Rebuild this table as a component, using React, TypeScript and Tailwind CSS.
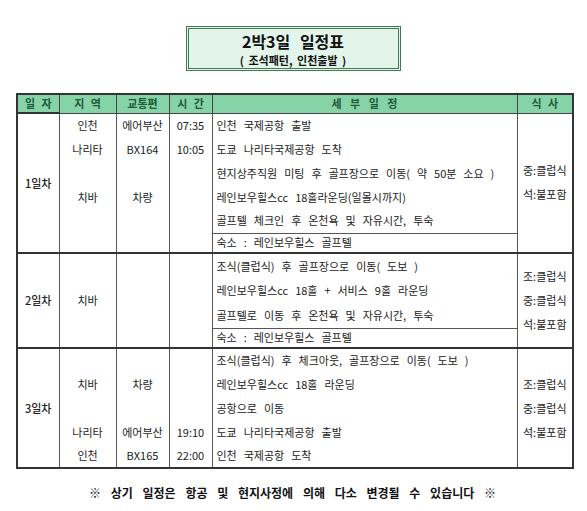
import React from 'react'

type Line = { area?: string; trans?: string; time?: string; text: string }

const days: { label: string; lines: Line[]; stay: string; meals: string[]; h: string; areaSpan?: string }[] = [
  {
    label: '1일차',
    h: 'h-[24px]',
    lines: [
      { area: '인천', trans: '에어부산', time: '07:35', text: '인천 국제공항 출발' },
      { area: '나리타', trans: 'BX164', time: '10:05', text: '도쿄 나리타국제공항 도착' },
      { text: '현지상주직원 미팅 후 골프장으로 이동( 약 50분 소요 )' },
      { area: '치바', trans: '차량', text: '레인보우힐스cc 18홀라운딩(일몰시까지)' },
      { text: '골프텔 체크인 후 온천욕 및 자유시간, 투숙' },
    ],
    stay: '숙소 : 레인보우힐스 골프텔',
    meals: ['중:클럽식', '석:불포함'],
  },
  {
    label: '2일차',
    h: 'h-[25px]',
    areaSpan: '치바',
    lines: [
      { text: '조식(클럽식) 후 골프장으로 이동( 도보 )' },
      { text: '레인보우힐스cc 18홀 + 서비스 9홀 라운딩' },
      { text: '골프텔로 이동 후 온천욕 및 자유시간, 투숙' },
    ],
    stay: '숙소 : 레인보우힐스 골프텔',
    meals: ['조:클럽식', '중:클럽식', '석:불포함'],
  },
  {
    label: '3일차',
    h: 'h-[24px]',
    lines: [
      { text: '조식(클럽식) 후 체크아웃, 골프장으로 이동( 도보 )' },
      { area: '치바', trans: '차량', text: '레인보우힐스cc 18홀 라운딩' },
      { text: '공항으로 이동' },
      { area: '나리타', trans: '에어부산', time: '19:10', text: '도쿄 나리타국제공항 출발' },
      { area: '인천', trans: 'BX165', time: '22:00', text: '인천 국제공항 도착' },
    ],
    stay: '',
    meals: ['조:클럽식', '중:클럽식', '석:불포함'],
  },
]

const side = 'border-x border-[#555] text-center p-0'
const th = 'border border-[#444] bg-[#86d3a8] text-[#1e5a36] font-bold text-center p-0 [word-spacing:4px]'

export default function App() {
  return (
    <div
      className="w-[587px] h-[511px] bg-white text-[#222] text-[11px] overflow-hidden"
      style={{ fontFamily: '"Noto Sans CJK KR", "Noto Sans", sans-serif' }}
    >
      <div className="flex justify-center pt-[26px]">
        <div className="w-[215px] h-[45px] border-[3px] border-double border-[#3f7a52] bg-[#e3f4ea] flex flex-col items-center justify-center -ml-[1px]">
          <div className="text-[16px] font-bold leading-[22px] text-[#111] [word-spacing:6px]">2박3일 일정표</div>
          <div className="text-[11px] font-bold leading-[16px] text-[#111] [word-spacing:2px]">( 조석패턴, 인천출발 )</div>
        </div>
      </div>

      <table className="mt-[22px] ml-[16px] w-[556px] border-collapse border-2 border-[#333] table-fixed leading-none">
        <colgroup>
          <col className="w-[42px]" />
          <col className="w-[57px]" />
          <col className="w-[53px]" />
          <col className="w-[43px]" />
          <col className="w-[305px]" />
          <col className="w-[56px]" />
        </colgroup>
        <thead>
          <tr className="h-[19px]">
            <th className={th}>일 자</th>
            <th className={th}>지 역</th>
            <th className={`${th} [word-spacing:0px]`}>교통편</th>
            <th className={th}>시 간</th>
            <th className={`${th} [word-spacing:6px]`}>세 부 일 정</th>
            <th className={th}>식 사</th>
          </tr>
        </thead>
        <tbody>
          {days.map((d) => {
            const total = d.lines.length + (d.stay ? 1 : 0)
            return (
              <React.Fragment key={d.label}>
                {d.lines.map((l, i) => (
                  <tr key={i} className={d.h}>
                    {i === 0 && (
                      <td rowSpan={total} className="border-2 border-[#333] border-r border-r-[#555] text-center font-medium p-0">
                        {d.label}
                      </td>
                    )}
                    {d.areaSpan ? (
                      i === 0 && (
                        <>
                          <td rowSpan={total} className={side}>{d.areaSpan}</td>
                          <td rowSpan={total} className={side}></td>
                          <td rowSpan={total} className={side}></td>
                        </>
                      )
                    ) : (
                      <>
                        <td className={side}>{l.area}</td>
                        <td className={side}>{l.trans}</td>
                        <td className={side}>{l.time}</td>
                      </>
                    )}
                    <td className="border-x border-[#555] pl-[4px] p-0 whitespace-nowrap [word-spacing:4.5px]">{l.text}</td>
                    {i === 0 && (
                      <td rowSpan={total} className="border-x border-[#555] p-0">
                        <div className="flex flex-col items-center justify-center">
                          {d.meals.map((m) => (
                            <div key={m} className="h-[24px] flex items-center">{m}</div>
                          ))}
                        </div>
                      </td>
                    )}
                  </tr>
                ))}
                {d.stay && (
                  <tr className="h-[20px] border-b-2 border-[#333]">
                    {!d.areaSpan && (
                      <>
                        <td className={side}></td>
                        <td className={side}></td>
                        <td className={side}></td>
                      </>
                    )}
                    <td className="border border-[#555] pl-[4px] p-0 whitespace-nowrap [word-spacing:4.5px]">{d.stay}</td>
                  </tr>
                )}
              </React.Fragment>
            )
          })}
        </tbody>
      </table>

      <div className="mt-[15px] text-center font-bold text-[12px] text-[#111] [word-spacing:7px] pr-[2px]">
        ※ 상기 일정은 항공 및 현지사정에 의해 다소 변경될 수 있습니다 ※
      </div>
    </div>
  )
}
